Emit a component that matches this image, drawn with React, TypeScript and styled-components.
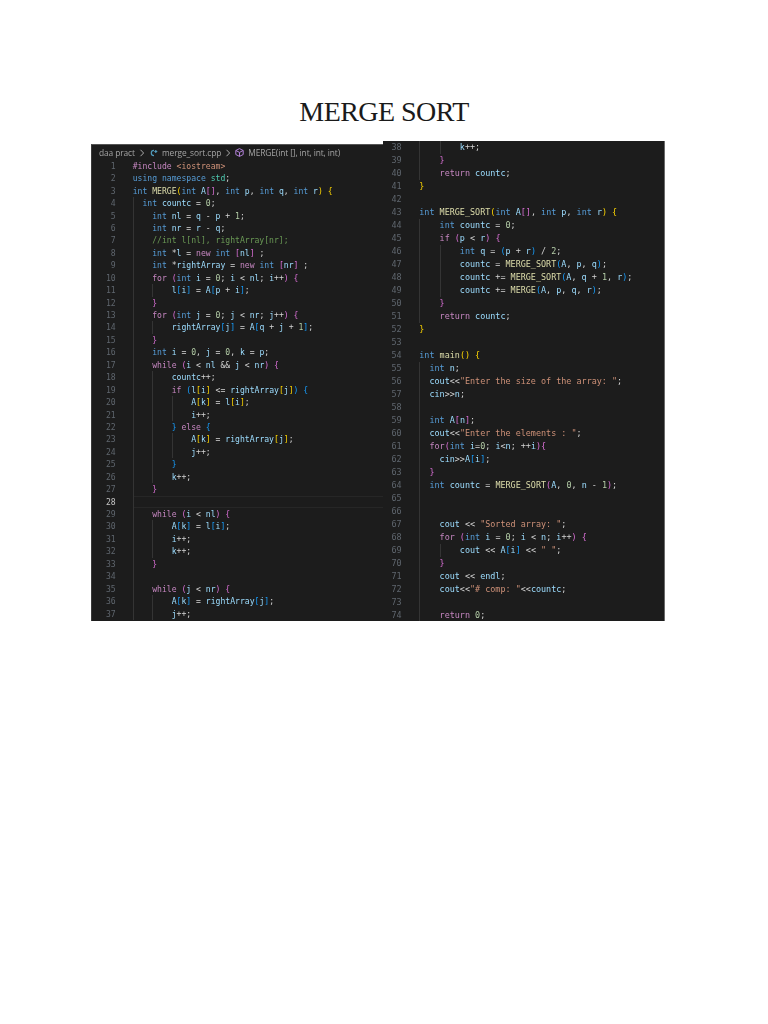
import styled, { createGlobalStyle } from "styled-components";

type CodeLine = [number, string];

// markup: segments split by "|", first char of a segment picks the colour
const leftLines: CodeLine[] = [
  [0, "c#include |s<iostream>"],
  [0, "kusing |knamespace |tstd|o;"],
  [0, "kint |fMERGE|y(|kint |vA|p[]|o, |kint |vp|o, |kint |vq|o, |kint |vr|y) {"],
  [2, "kint |vcountc |o= |n0|o;"],
  [4, "kint |vnl |o= |vq |o- |vp |o+ |n1|o;"],
  [4, "kint |vnr |o= |vr |o- |vq|o;"],
  [4, "g//int l[nl], rightArray[nr];"],
  [4, "kint |o*|vl |o= |cnew |kint |p[|vnl|p] |o;"],
  [4, "kint |o*|vrightArray |o= |cnew |kint |p[|vnr|p] |o;"],
  [4, "cfor |p(|kint |vi |o= |n0|o; |vi |o< |vnl|o; |vi|o++|p) {"],
  [8, "vl|b[|vi|b] |o= |vA|b[|vp |o+ |vi|b]|o;"],
  [4, "p}"],
  [4, "cfor |p(|kint |vj |o= |n0|o; |vj |o< |vnr|o; |vj|o++|p) {"],
  [8, "vrightArray|b[|vj|b] |o= |vA|b[|vq |o+ |vj |o+ |n1|b]|o;"],
  [4, "p}"],
  [4, "kint |vi |o= |n0|o, |vj |o= |n0|o, |vk |o= |vp|o;"],
  [4, "cwhile |p(|vi |o< |vnl |o&& |vj |o< |vnr|p) {"],
  [8, "vcountc|o++;"],
  [8, "cif |b(|vl|y[|vi|y] |o<= |vrightArray|y[|vj|y]|b) {"],
  [12, "vA|y[|vk|y] |o= |vl|y[|vi|y]|o;"],
  [12, "vi|o++;"],
  [8, "b} |celse |b{"],
  [12, "vA|y[|vk|y] |o= |vrightArray|y[|vj|y]|o;"],
  [12, "vj|o++;"],
  [8, "b}"],
  [8, "vk|o++;"],
  [4, "p}"],
  [4, ""],
  [4, "cwhile |p(|vi |o< |vnl|p) {"],
  [8, "vA|b[|vk|b] |o= |vl|b[|vi|b]|o;"],
  [8, "vi|o++;"],
  [8, "vk|o++;"],
  [4, "p}"],
  [4, ""],
  [4, "cwhile |p(|vj |o< |vnr|p) {"],
  [8, "vA|b[|vk|b] |o= |vrightArray|b[|vj|b]|o;"],
  [8, "vj|o++;"],
];

const rightLines: CodeLine[] = [
  [8, "vk|o++;"],
  [4, "p}"],
  [4, "creturn |vcountc|o;"],
  [0, "y}"],
  [0, ""],
  [0, "kint |fMERGE_SORT|y(|kint |vA|p[]|o, |kint |vp|o, |kint |vr|y) {"],
  [4, "kint |vcountc |o= |n0|o;"],
  [4, "cif |p(|vp |o< |vr|p) {"],
  [8, "kint |vq |o= |b(|vp |o+ |vr|b) |o/ |n2|o;"],
  [8, "vcountc |o= |fMERGE_SORT|b(|vA|o, |vp|o, |vq|b)|o;"],
  [8, "vcountc |o+= |fMERGE_SORT|b(|vA|o, |vq |o+ |n1|o, |vr|b)|o;"],
  [8, "vcountc |o+= |fMERGE|b(|vA|o, |vp|o, |vq|o, |vr|b)|o;"],
  [4, "p}"],
  [4, "creturn |vcountc|o;"],
  [0, "y}"],
  [0, ""],
  [0, "kint |fmain|y() {"],
  [2, "kint |vn|o;"],
  [2, "vcout|o<<|s\"Enter the size of the array: \"|o;"],
  [2, "vcin|o>>|vn|o;"],
  [2, ""],
  [2, "kint |vA|p[|vn|p]|o;"],
  [2, "vcout|o<<|s\"Enter the elements : \"|o;"],
  [2, "cfor|p(|kint |vi|o=|n0|o; |vi|o<|vn|o; ++|vi|p){"],
  [4, "vcin|o>>|vA|b[|vi|b]|o;"],
  [2, "p}"],
  [2, "kint |vcountc |o= |fMERGE_SORT|p(|vA|o, |n0|o, |vn |o- |n1|p)|o;"],
  [2, ""],
  [2, ""],
  [4, "vcout |o<< |s\"Sorted array: \"|o;"],
  [4, "cfor |p(|kint |vi |o= |n0|o; |vi |o< |vn|o; |vi|o++|p) {"],
  [8, "vcout |o<< |vA|b[|vi|b] |o<< |s\" \"|o;"],
  [4, "p}"],
  [4, "vcout |o<< |vendl|o;"],
  [4, "vcout|o<<|s\"# comp: \"|o<<|vcountc|o;"],
  [2, ""],
  [4, "creturn |n0|o;"],
];

const tokenColors: Record<string, string> = {
  k: "#569cd6",
  c: "#c586c0",
  v: "#9cdcfe",
  f: "#dcdcaa",
  o: "#d4d4d4",
  n: "#b5cea8",
  s: "#ce9178",
  g: "#6a9955",
  t: "#4ec9b0",
  y: "#ffd700",
  p: "#da70d6",
  b: "#179fff",
};

const CodeBlock = ({ lines, start, activeLine }: { lines: CodeLine[]; start: number; activeLine?: number }) => (
  <>
    {lines.map(([indent, markup], idx) => {
      const num = start + idx;
      const cells: number[] = [];
      for (let col = 0; col < indent; col += 4) cells.push(Math.min(4, indent - col));
      return (
        <Row key={num}>
          <LineNo $active={num === activeLine}>{num}</LineNo>
          <Code $active={num === activeLine}>
            {cells.map((w, i) => (
              <IndentGuide key={i} $cols={w} />
            ))}
            {markup &&
              markup.split("|").map((seg, i) => (
                <Token key={i} $color={tokenColors[seg[0]]}>
                  {seg.slice(1)}
                </Token>
              ))}
          </Code>
        </Row>
      );
    })}
  </>
);

const Chevron = () => (
  <svg width="6" height="8" viewBox="0 0 6 8" fill="none" stroke="#a8a8a8" strokeWidth="1">
    <path d="M1.5 .8 4.6 4 1.5 7.2" />
  </svg>
);

const App = () => {
  return (
    <Page>
      <GlobalStyle />
      <Title>MERGE SORT</Title>
      <Shots>
        <LeftShot>
          <Breadcrumb>
            <Crumb>daa pract</Crumb>
            <Chevron />
            <svg width="9" height="8" viewBox="0 0 9 8" fill="none" stroke="#519aba" strokeWidth="1.2">
              <path d="M5 1.3A2.6 2.6 0 1 0 5 6.7" />
              <path d="M6.8 1v3M5.3 2.5h3" />
            </svg>
            <Crumb>merge_sort.cpp</Crumb>
            <Chevron />
            <svg width="9" height="9" viewBox="0 0 9 9" fill="none" stroke="#b180d7" strokeWidth="1">
              <path d="M4.5.6 8.2 2.5v4L4.5 8.4.8 6.5v-4Z" />
              <path d="M.8 2.5 4.5 4.4 8.2 2.5M4.5 4.4v4" />
            </svg>
            <Crumb>MERGE(int [], int, int, int)</Crumb>
          </Breadcrumb>
          <CodeBlock lines={leftLines} start={1} activeLine={28} />
        </LeftShot>
        <RightShot>
          <CodeBlock lines={rightLines} start={38} />
        </RightShot>
      </Shots>
    </Page>
  );
};

const GlobalStyle = createGlobalStyle`
  html, body {
    margin: 0;
    background: #ffffff;
  }
`;

const Page = styled.div`
  display: flex;
  flex-direction: column;
  min-height: 1024px;
  padding-top: 95px;
  box-sizing: border-box;
`;

const Title = styled.h1`
  margin: 0 0 12px;
  height: 34px;
  font-family: "Liberation Serif", serif;
  font-size: 28px;
  line-height: 34px;
  font-weight: 400;
  letter-spacing: -0.55px;
  text-align: center;
  color: #1a1a1a;
`;

const Shots = styled.div`
  display: flex;
  align-items: flex-end;
  padding-left: 91px;
`;

const Shot = styled.div`
  overflow: hidden;
  box-sizing: border-box;
  background: #1c1c1c;
  font-family: "DejaVu Sans Mono", monospace;
  white-space: pre;
  filter: blur(0.35px);
`;

const LeftShot = styled(Shot)`
  --gutter: 23.7px;
  --gap: 17px;
  width: 292px;
  height: 477px;
  font-size: 8.1px;
  line-height: 12.44px;
  border-left: 1px solid #3a3a3a;
  border-top: 1px solid #555555;
`;

const RightShot = styled(Shot)`
  --gutter: 18.7px;
  --gap: 17.6px;
  width: 282px;
  height: 480px;
  font-size: 8.44px;
  line-height: 12.99px;
  border-right: 1px solid #6a6a6a;

  & > div:first-child {
    margin-top: 0.3px;
  }
`;

const Breadcrumb = styled.div`
  display: flex;
  align-items: center;
  gap: 4px;
  height: 14.8px;
  padding: 1px 0 0 7px;
  box-sizing: border-box;
`;

const Crumb = styled.span`
  font-family: "Open Sans", sans-serif;
  font-size: 8.4px;
  letter-spacing: -0.1px;
  color: #a4a4a4;
`;

const Row = styled.div`
  display: flex;
`;

const LineNo = styled.span<{ $active: boolean }>`
  flex: none;
  width: var(--gutter);
  margin-right: var(--gap);
  text-align: right;
  color: ${(p) => (p.$active ? "#c6c6c6" : "#5f666e")};
`;

const Code = styled.span<{ $active: boolean }>`
  flex: 1;
  display: flex;
  box-shadow: ${(p) => (p.$active ? "inset 0 1px #262626, inset 0 -1px #262626" : "none")};
`;

const IndentGuide = styled.span<{ $cols: number }>`
  flex: none;
  box-sizing: border-box;
  width: ${(p) => p.$cols}ch;
  border-left: 1px solid #343434;
`;

const Token = styled.span<{ $color: string }>`
  color: ${(p) => p.$color};
`;

export default App;
